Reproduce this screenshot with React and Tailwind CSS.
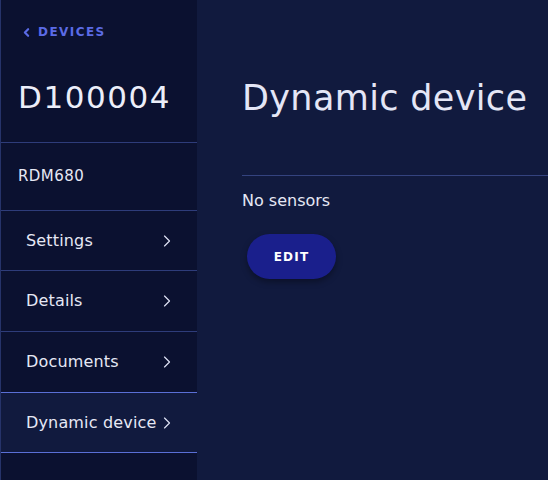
import React from 'react';
import { ChevronLeft, ChevronRight } from 'lucide-react';

const font = { fontFamily: '"DejaVu Sans", "Noto Sans", sans-serif' };

const items = [
    { label: 'Settings', first: true },
    { label: 'Details' },
    { label: 'Documents' },
    { label: 'Dynamic device', active: true },
];

function NavItem({ label, active, first }) {
    return (
        <div
            className={`flex items-center justify-between ${first ? 'h-[60px]' : 'h-[61px]'} pl-[25px] pr-[20px] border-b ${
                active
                    ? 'bg-[#111a3e] border-[#5a6fd6] border-t -mt-px'
                    : 'border-[#2e3c7a]'
            }`}
        >
            <span className="text-[16px] tracking-[0.01em] text-[#e6e8f5]">{label}</span>
            <ChevronRight size={20} strokeWidth={1.4} className="text-[#dfe3f5]" />
        </div>
    );
}

export default function App() {
    return (
        <div className="flex w-[548px] h-[480px] bg-[#111a3e] overflow-hidden" style={font}>
            <aside className="w-[197px] shrink-0 bg-[#0b1130] border-l border-[#26336a] flex flex-col">
                <div className="flex items-center gap-[5px] pl-[19px] pt-[22px] h-[42px] text-[#5b6be6] text-[12px] leading-[18px] font-bold tracking-[0.12em]">
                    <ChevronLeft size={13} strokeWidth={4} />
                    <span>DEVICES</span>
                </div>
                <div className="pl-[17px] pt-[37px] pb-[27px] text-[31px] leading-[36px] font-medium text-[#eceef9] tracking-[0.05em]">
                    D100004
                </div>
                <div className="border-t border-b border-[#2e3c7a] h-[69px] flex items-center pl-[17px] text-[15px] tracking-[0.03em] font-medium text-[#e6e8f5]">
                    RDM680
                </div>
                {items.map(item => (
                    <NavItem key={item.label} {...item} />
                ))}
            </aside>
            <main className="flex-1 pl-[45px]">
                <h1 className="pt-[78px] text-[35px] font-medium text-[#e4e6f6] tracking-[0.01em] leading-[40px] whitespace-nowrap">
                    Dynamic device
                </h1>
                <div className="mt-[57px] border-t border-[#34437f]" />
                <p className="mt-[15px] text-[16px] leading-[20px] text-[#e6e8f5]">No sensors</p>
                <button className="mt-[23px] ml-[5px] w-[89px] h-[45px] rounded-full bg-[#1a1f8c] shadow-[0_3px_6px_rgba(0,0,0,0.35)] text-white text-[12px] font-bold tracking-[0.1em]">
                    EDIT
                </button>
            </main>
        </div>
    );
}
